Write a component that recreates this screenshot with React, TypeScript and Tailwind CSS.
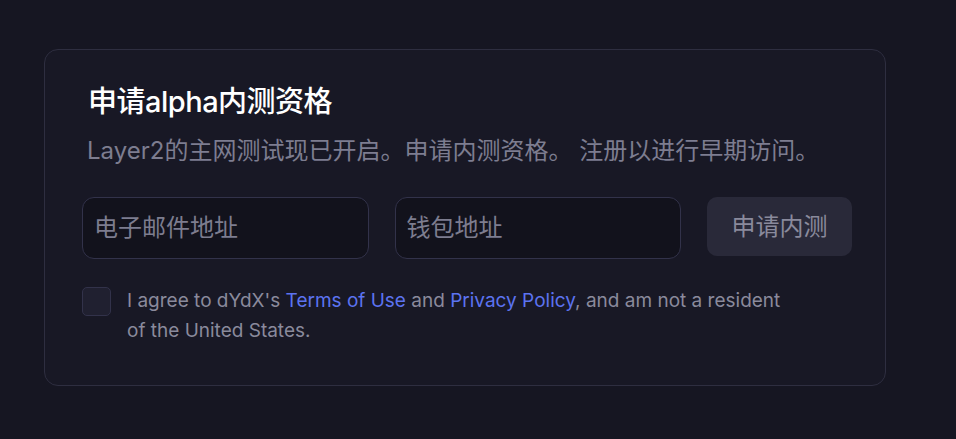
const font = { fontFamily: 'Inter, "Noto Sans CJK SC", sans-serif' };

const App = () => {
  return (
    <div className="min-h-screen w-full bg-[#161622] pt-[49px] pl-[44px]" style={font}>
      <div className="w-[842px] h-[337px] rounded-[14px] border border-[#2e2e40] bg-[#181825] pl-[37px] pr-[33px] pt-[35px]">
        <h1 className="text-[29px] leading-[34px] font-medium text-white tracking-[-0.5px] pl-[6px]">
          申请alpha内测资格
        </h1>
        <p className="mt-[17px] text-[24px] leading-[30px] text-[#7d7d90] pl-[5px]">
          Layer2的主网测试现已开启。申请内测资格。 注册以进行早期访问。
        </p>

        <div className="mt-[31px] flex items-start gap-[26px]">
          <div className="w-[287px] h-[62px] rounded-[12px] border border-[#32324a] bg-[#12121c] flex items-center px-[11px]">
            <span className="text-[24px] text-[#7d7d8f]">电子邮件地址</span>
          </div>
          <div className="w-[287px] h-[62px] rounded-[12px] border border-[#32324a] bg-[#12121c] flex items-center px-[11px]">
            <span className="text-[24px] text-[#7d7d8f]">钱包地址</span>
          </div>
          <button className="w-[145px] h-[59px] rounded-[10px] bg-[#292939] text-[24px] text-[#8a8a9c]">
            申请内测
          </button>
        </div>

        <div className="mt-[28px] flex items-start gap-[16px]">
          <div className="w-[29px] h-[29px] rounded-[5px] border border-[#32324a] bg-[#202030] shrink-0" />
          <p className="w-[662px] -mt-[1px] text-[19px] leading-[30px] text-[#8a8a9c]">
            I agree to dYdX's <span className="text-[#5c73f0]">Terms of Use</span> and{" "}
            <span className="text-[#5c73f0]">Privacy Policy</span>, and am not a resident of the
            United States.
          </p>
        </div>
      </div>
    </div>
  );
};

export default App;
